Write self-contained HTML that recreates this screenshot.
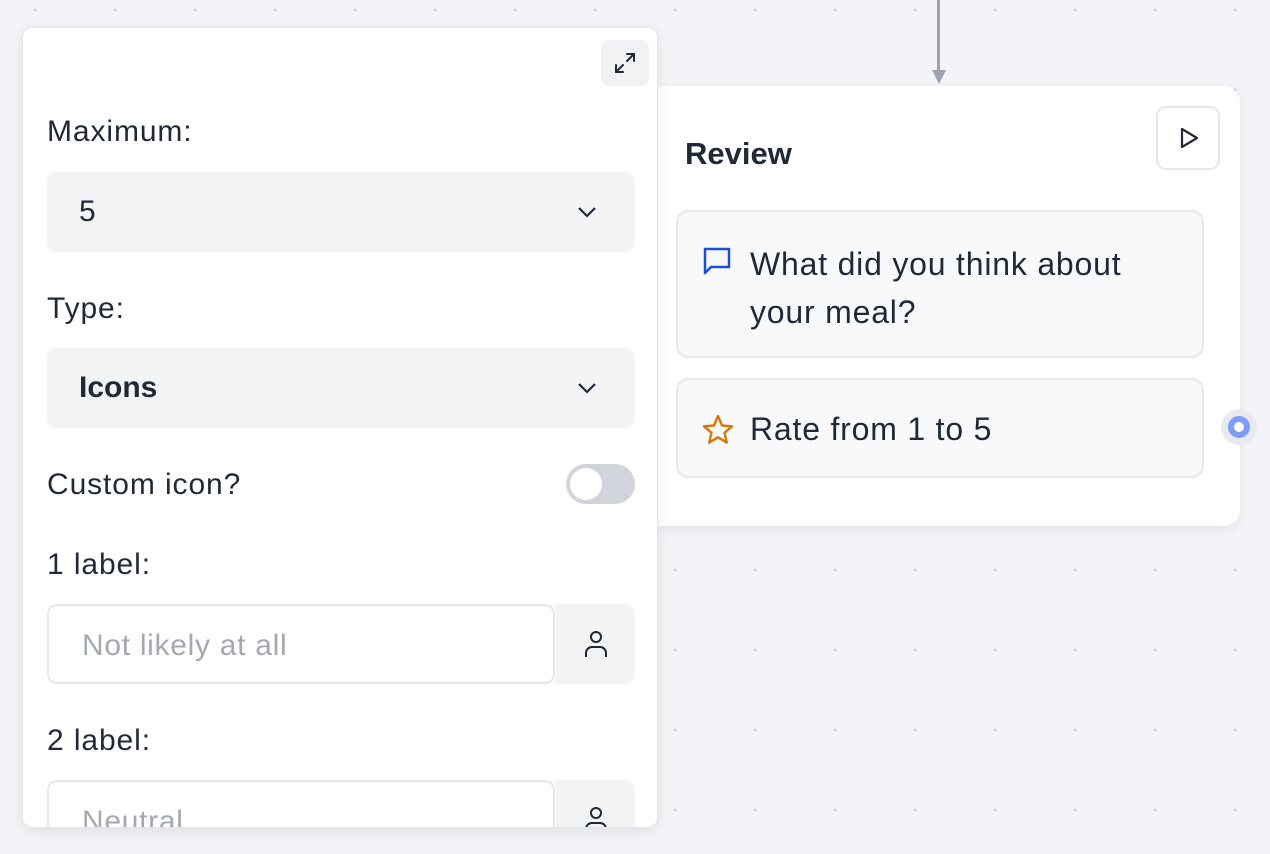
<!DOCTYPE html>
<html><head><style>
*{box-sizing:border-box;margin:0;padding:0}
body{width:1270px;height:854px;overflow:hidden;background:#f3f4f7;font-family:"Liberation Sans",sans-serif;color:#1f2937;position:relative;
background-image:radial-gradient(circle,#c4c8d2 1.3px,transparent 1.6px);background-size:80px 80px;background-position:-5px -30px}
.abs{position:absolute}
.panel{left:22px;top:27px;width:636px;height:801px;background:#fff;border:1px solid #e3e5ea;border-radius:10px;box-shadow:0 4px 14px rgba(0,0,0,.08);overflow:hidden}
.lbl{font-size:30px;letter-spacing:0.9px;color:#1f2937}
.sel{background:#f3f4f6;border-radius:10px;height:80px;width:588px;left:24px;font-size:30px;padding-left:32px;line-height:80px}
.inp{left:24px;width:508px;height:80px;border:2px solid #e5e7eb;border-radius:10px;font-size:30px;letter-spacing:0.7px;color:#a3a8b1;padding-left:33px;line-height:80px}
.ib{left:533px;width:79px;height:80px;background:#f3f4f6;border-radius:0 10px 10px 0}
.card{left:658px;top:86px;width:582px;height:440px;background:#fff;border-radius:0 16px 16px 0;box-shadow:0 4px 12px rgba(0,0,0,.07)}
.blk{left:18px;width:528px;background:#f8f9fb;border:2px solid #e5e7eb;border-radius:12px;font-size:32px;letter-spacing:0.8px;color:#1f2937}
</style></head><body>
<div class="abs" style="left:937px;top:0;width:3px;height:74px;background:#9ca3af"></div>
<svg class="abs" style="left:931px;top:68px" width="16" height="18"><path d="M1 2 L8 16 L15 2 Z" fill="#9ca3af"/></svg>
<div class="abs card">
  <div class="abs" style="left:27px;top:50px;font-size:31px;font-weight:bold">Review</div>
  <div class="abs" style="left:498px;top:20px;width:64px;height:64px;border:2px solid #e5e7eb;border-radius:10px">
    <svg class="abs" style="left:20px;top:18px" width="24" height="26"><path d="M4 3 L19 12 L4 21 Z" fill="none" stroke="#1f2937" stroke-width="2.2" stroke-linejoin="round"/></svg>
  </div>
  <div class="abs blk" style="top:124px;height:148px">
    <svg class="abs" style="left:24px;top:34px" width="32" height="32"><path d="M3 3 H27 V21 H9 L3 27 Z" fill="none" stroke="#1d4ed8" stroke-width="2.5" stroke-linejoin="round"/></svg>
    <div class="abs" style="left:72px;top:28px;line-height:48px">What did you think about<br>your meal?</div>
  </div>
  <div class="abs blk" style="top:292px;height:100px">
    <svg class="abs" style="left:24px;top:34px" width="32" height="32"><path d="M16 2 L20 11.5 L30 12.3 L22.5 18.8 L24.8 28.6 L16 23.3 L7.2 28.6 L9.5 18.8 L2 12.3 L12 11.5 Z" fill="none" stroke="#d97706" stroke-width="2.4" stroke-linejoin="round"/></svg>
    <div class="abs" style="left:72px;top:31px">Rate from 1 to 5</div>
  </div>
</div>
<div class="abs" style="left:1221px;top:409px;width:36px;height:36px;border-radius:50%;background:#e8eaf0"></div>
<div class="abs" style="left:1228px;top:416px;width:22px;height:22px;border-radius:50%;border:6px solid #7c9cf5;background:#fff"></div>
<div class="abs panel">
  <div class="abs" style="left:578px;top:12px;width:48px;height:46px;background:#f1f2f4;border-radius:8px">
    <svg class="abs" style="left:12px;top:11px" width="24" height="24"><path d="M14 3 H21 V10 M21 3 L14 10 M3 14 V21 H10 M3 21 L10 14" fill="none" stroke="#1f2937" stroke-width="2" stroke-linecap="round"/></svg>
  </div>
  <div class="abs lbl" style="left:24px;top:87px">Maximum:</div>
  <div class="abs sel" style="top:144px">5</div>
  <svg class="abs" style="left:553px;top:176px" width="22" height="16"><path d="M3 4 L11 12 L19 4" fill="none" stroke="#1f2937" stroke-width="2.2"/></svg>
  <div class="abs lbl" style="left:24px;top:264px">Type:</div>
  <div class="abs sel" style="top:320px;font-weight:bold">Icons</div>
  <svg class="abs" style="left:553px;top:352px" width="22" height="16"><path d="M3 4 L11 12 L19 4" fill="none" stroke="#1f2937" stroke-width="2.2"/></svg>
  <div class="abs lbl" style="left:24px;top:440px">Custom icon?</div>
  <div class="abs" style="left:543px;top:436px;width:69px;height:40px;border-radius:20px;background:#d1d5db"></div>
  <div class="abs" style="left:547px;top:440px;width:32px;height:32px;border-radius:50%;background:#fff"></div>
  <div class="abs lbl" style="left:24px;top:520px">1 label:</div>
  <div class="abs inp" style="top:576px">Not likely at all</div>
  <div class="abs ib" style="top:576px"><svg class="abs" style="left:26px;top:26px" width="28" height="30"><circle cx="14" cy="7" r="5" fill="none" stroke="#1f2937" stroke-width="2"/><path d="M4 27 V23 A6 6 0 0 1 10 17 H18 A6 6 0 0 1 24 23 V27" fill="none" stroke="#1f2937" stroke-width="2"/></svg></div>
  <div class="abs lbl" style="left:24px;top:696px">2 label:</div>
  <div class="abs inp" style="top:752px">Neutral</div>
  <div class="abs ib" style="top:752px"><svg class="abs" style="left:26px;top:26px" width="28" height="30"><circle cx="14" cy="7" r="5" fill="none" stroke="#1f2937" stroke-width="2"/><path d="M4 27 V23 A6 6 0 0 1 10 17 H18 A6 6 0 0 1 24 23 V27" fill="none" stroke="#1f2937" stroke-width="2"/></svg></div>
</div>
</body></html>
